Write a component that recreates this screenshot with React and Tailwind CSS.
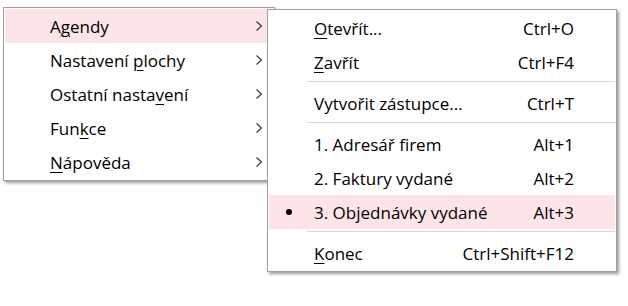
import React from "react";

const font = { fontFamily: '"Open Sans", "Noto Sans", sans-serif' };

function Chevron() {
  return (
    <svg width="8" height="10" viewBox="0 0 8 10" className="shrink-0">
      <polyline points="1.5,0.5 6.5,5 1.5,9.5" fill="none" stroke="#333" strokeWidth="1.1" />
    </svg>
  );
}

function Label({ text, u }) {
  if (u === undefined) return <span>{text}</span>;
  return (
    <span>
      {text.slice(0, u)}
      <span className="underline underline-offset-[3px] decoration-1">{text[u]}</span>
      {text.slice(u + 1)}
    </span>
  );
}

const leftItems = [
  { t: "Agendy", u: 1, active: true },
  { t: "Nastavení plochy", u: 10 },
  { t: "Ostatní nastavení", u: 13 },
  { t: "Funkce", u: 3 },
  { t: "Nápověda", u: 0 },
];

const rightItems = [
  { t: "Otevřít...", u: 0, k: "Ctrl+O" },
  { t: "Zavřít", u: 0, k: "Ctrl+F4" },
  { sep: true },
  { t: "Vytvořit zástupce...", k: "Ctrl+T" },
  { sep: true },
  { t: "1. Adresář firem", k: "Alt+1" },
  { t: "2. Faktury vydané", k: "Alt+2" },
  { t: "3. Objednávky vydané", k: "Alt+3", active: true },
  { sep: true },
  { t: "Konec", u: 0, k: "Ctrl+Shift+F12" },
];

export default function App() {
  return (
    <div className="relative w-[628px] h-[306px] bg-white text-[17px] text-black overflow-hidden" style={font}>
      <div className="pt-[7px] pl-[3px]">
        <div className="w-[272px] border border-[#a0a0a0] bg-white p-[1px] shadow-[2px_2px_3px_rgba(0,0,0,0.4)]">
          {leftItems.map((it) => (
            <div
              key={it.t}
              className={`flex items-center h-[34px] pl-[45px] pr-[10px] ${it.active ? "bg-[#fde4e7]" : ""}`}
            >
              <div className="flex-1 leading-none pt-[1px]">
                <Label text={it.t} u={it.u} />
              </div>
              <Chevron />
            </div>
          ))}
        </div>
      </div>

      <div className="absolute left-[267px] top-[9px] w-[350px] border border-[#a0a0a0] bg-white p-[1px] shadow-[2px_2px_3px_rgba(0,0,0,0.4)]">
        {rightItems.map((it, i) =>
          it.sep ? (
            <div key={i} className="h-[7px] pt-[2px] pl-[38px]">
              <div className="h-px bg-[#d7d7d7]" />
            </div>
          ) : (
            <div
              key={i}
              className={`relative flex items-center h-[34px] pl-[45px] pr-[41px] ${it.active ? "bg-[#fde4e7]" : ""}`}
            >
              {it.active && (
                <span className="absolute left-[17px] top-[14px] w-[6px] h-[6px] rounded-full bg-black" />
              )}
              <div className="flex-1 leading-none pt-[1px]">
                <Label text={it.t} u={it.u} />
              </div>
              <div className="leading-none pt-[1px]">{it.k}</div>
            </div>
          )
        )}
      </div>
    </div>
  );
}
